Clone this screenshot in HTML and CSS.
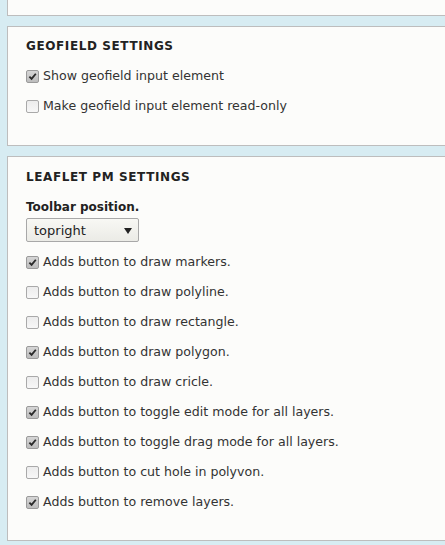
FILE: index.html
```html
<!DOCTYPE html>
<html>
<head>
<meta charset="utf-8">
<link rel="stylesheet" href="styles.css">
</head>
<body>
<div class="page">
  <div class="panel panel-top"></div>

  <div class="panel panel-geo">
    <h2 class="legend">GEOFIELD SETTINGS</h2>
    <div class="list">
      <label class="row"><span class="cb checked"><svg viewBox="0 0 12 12" width="12" height="12"><path d="M2.6 6.2 L5 8.6 L9.6 3" fill="none" stroke="#2a2a2a" stroke-width="2"/></svg></span>Show geofield input element</label>
      <label class="row"><span class="cb"></span>Make geofield input element read-only</label>
    </div>
  </div>

  <div class="panel panel-pm">
    <h2 class="legend">LEAFLET PM SETTINGS</h2>
    <div class="field-label">Toolbar position.</div>
    <div class="select"><span>topright</span><span class="arrow"></span></div>
    <div class="list list-pm">
      <label class="row"><span class="cb checked"><svg viewBox="0 0 12 12" width="12" height="12"><path d="M2.6 6.2 L5 8.6 L9.6 3" fill="none" stroke="#2a2a2a" stroke-width="2"/></svg></span>Adds button to draw markers.</label>
      <label class="row"><span class="cb"></span>Adds button to draw polyline.</label>
      <label class="row"><span class="cb"></span>Adds button to draw rectangle.</label>
      <label class="row"><span class="cb checked"><svg viewBox="0 0 12 12" width="12" height="12"><path d="M2.6 6.2 L5 8.6 L9.6 3" fill="none" stroke="#2a2a2a" stroke-width="2"/></svg></span>Adds button to draw polygon.</label>
      <label class="row"><span class="cb"></span>Adds button to draw cricle.</label>
      <label class="row"><span class="cb checked"><svg viewBox="0 0 12 12" width="12" height="12"><path d="M2.6 6.2 L5 8.6 L9.6 3" fill="none" stroke="#2a2a2a" stroke-width="2"/></svg></span>Adds button to toggle edit mode for all layers.</label>
      <label class="row"><span class="cb checked"><svg viewBox="0 0 12 12" width="12" height="12"><path d="M2.6 6.2 L5 8.6 L9.6 3" fill="none" stroke="#2a2a2a" stroke-width="2"/></svg></span>Adds button to toggle drag mode for all layers.</label>
      <label class="row"><span class="cb"></span>Adds button to cut hole in polyvon.</label>
      <label class="row"><span class="cb checked"><svg viewBox="0 0 12 12" width="12" height="12"><path d="M2.6 6.2 L5 8.6 L9.6 3" fill="none" stroke="#2a2a2a" stroke-width="2"/></svg></span>Adds button to remove layers.</label>
    </div>
  </div>
</div>
</body>
</html>
```
FILE: styles.css
```css
html, body {
  margin: 0;
  padding: 0;
  background: #d7ecf2;
  overflow: hidden;
}
body {
  font-family: "DejaVu Sans", "Liberation Sans", sans-serif;
  font-size: 12.6px;
  color: #333;
}
.page {
  padding-left: 7px;
  display: flex;
  flex-direction: column;
  gap: 10px;
}
.panel {
  background: #fcfcfa;
  border: 1px solid #bdbdbd;
  border-right: none;
  padding-left: 18px;
}
.panel-top {
  border-top: none;
  height: 15px;
}
.panel-geo {
  padding-top: 11px;
  padding-bottom: 25px;
}
.panel-pm {
  padding-top: 12px;
  padding-bottom: 24px;
}
.legend {
  margin: 0;
  font-size: 12px;
  font-weight: bold;
  line-height: 16px;
  height: 16px;
  letter-spacing: 0.6px;
  color: #222;
}
.list {
  margin-top: 6px;
  display: flex;
  flex-direction: column;
}
.list-pm {
  margin-top: 4px;
}
.row {
  height: 30px;
  display: flex;
  align-items: center;
  gap: 4px;
  white-space: nowrap;
}
.cb {
  box-sizing: border-box;
  width: 13px;
  height: 13px;
  flex: none;
  border: 1px solid #a9a9a9;
  border-radius: 2px;
  background: linear-gradient(#ececec, #f7f7f7);
  display: flex;
  align-items: center;
  justify-content: center;
  margin-top: 2px;
}
.cb.checked {
  border-color: #9a9a9a;
  background: linear-gradient(#d6d6d6, #bdbdbd);
}
.cb svg {
  display: block;
  width: 11px;
  height: 11px;
}
.field-label {
  margin-top: 14px;
  font-weight: bold;
  font-size: 12px;
  line-height: 16px;
  color: #222;
}
.select {
  box-sizing: border-box;
  margin-top: 3px;
  width: 113px;
  height: 24px;
  border: 1px solid #a8a8a8;
  border-radius: 2px;
  background: linear-gradient(#f8f8f4, #ebebe6);
  display: flex;
  align-items: center;
  justify-content: space-between;
  padding: 0 6px 0 7px;
  font-size: 13px;
  color: #222;
}
.arrow {
  width: 0;
  height: 0;
  border-left: 4.5px solid transparent;
  border-right: 4.5px solid transparent;
  border-top: 6px solid #222;
  margin-top: 2px;
}
```
